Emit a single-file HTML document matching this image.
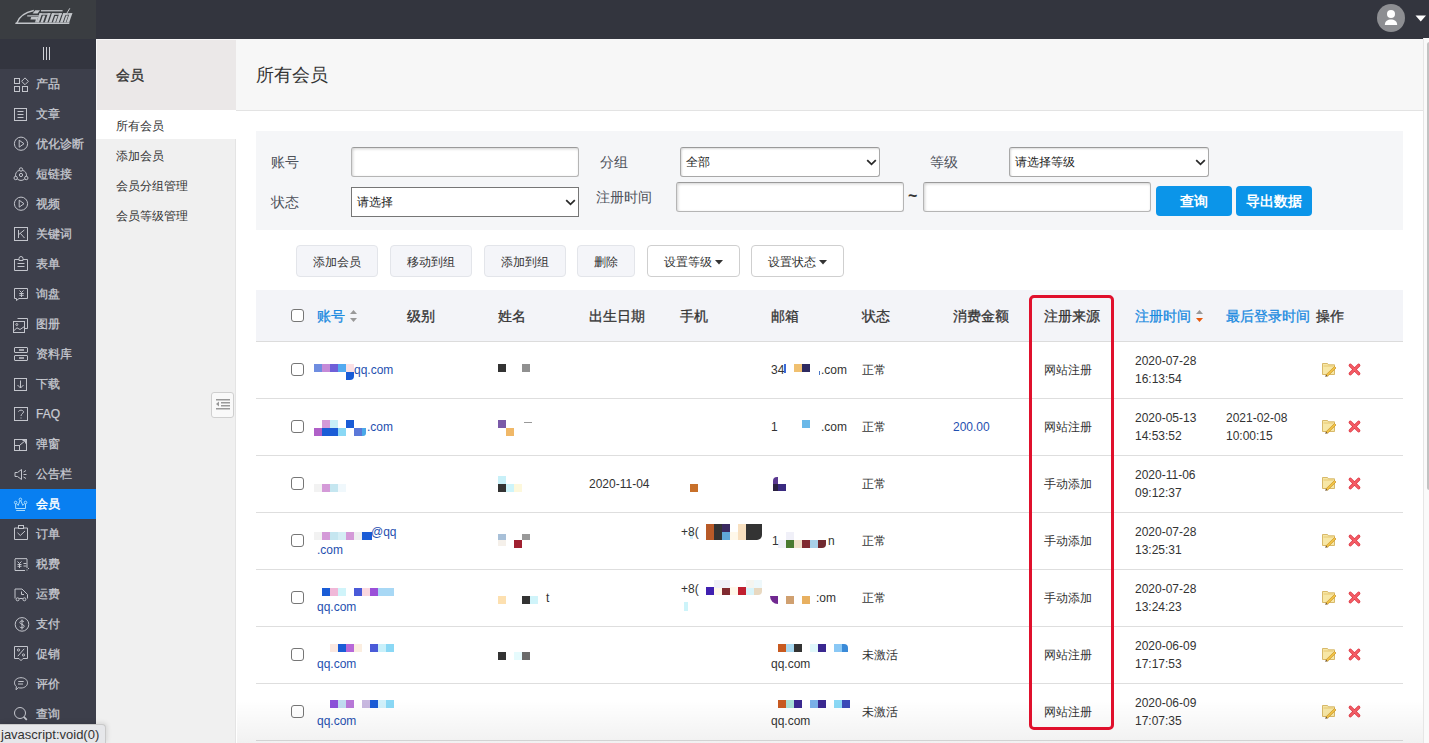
<!DOCTYPE html>
<html><head><meta charset="utf-8">
<style>
*{margin:0;padding:0;box-sizing:border-box}
html,body{width:1429px;height:743px;overflow:hidden;background:#fff;font-family:"Liberation Sans",sans-serif;color:#333;font-size:12px}
.abs{position:absolute}
#top{left:0;top:0;width:1429px;height:39px;background:#33353e}
#logo{left:0;top:0;width:96px;height:39px;background:#3a3d41}
#side{left:0;top:39px;width:96px;height:704px;background:#3d3f4b}
#tog{left:0;top:39px;width:96px;height:30px;background:#33353f}
.mi{position:absolute;left:0;width:96px;height:30px;color:#c9cbd2;font-size:12px;line-height:30px}
.mi span{position:absolute;left:36px;top:0;-webkit-text-stroke:0.25px currentColor}
.mi svg{position:absolute;left:0;top:0}
.mi.on{background:#087ff1;color:#fff}.mi.on span{-webkit-text-stroke:0.45px #fff}
#sub{left:96px;top:39px;width:140px;height:704px;background:#f0f0f0;border-right:1px solid #e4e4e4}
#subhd{left:96px;top:39px;width:140px;height:72px;background:#ebe8e8;border-bottom:1px solid #e0dede;box-shadow:inset 1px 1px 0 rgba(255,255,255,.6)}
.si{position:absolute;left:96px;width:140px;height:30px;line-height:30px;padding-left:20px;font-size:12px;color:#333}
#main{left:236px;top:39px;width:1187px;height:704px;background:#fff}
#mainhd{left:236px;top:39px;width:1187px;height:72px;background:#f7f7f7;border-bottom:1px solid #e3e3e3}
#filter{left:256px;top:131px;width:1147px;height:99px;background:#f5f6f8}
.lbl{position:absolute;font-size:14px;color:#4d515a;line-height:16px}
.inp{position:absolute;height:30px;background:#fff;border:1px solid #b5b5b5;border-top-color:#9a9a9a;border-radius:3px;box-shadow:inset 1px 1px 3px rgba(0,0,0,.18)}
.sel{position:absolute;height:30px;background:#fff;border:1px solid #a8a8a8;border-top-color:#9a9a9a;border-radius:3px;box-shadow:inset 1px 1px 2px rgba(0,0,0,.14)}
.sel span{position:absolute;left:5px;top:6px;font-size:12px;color:#222;line-height:16px}
.chev{position:absolute;top:11px}
.btnb{position:absolute;height:30px;background:#0b95e9;border-radius:4px;color:#fff;font-weight:bold;font-size:14px;line-height:30px;text-align:center}
.tb{position:absolute;top:245px;height:32px;background:#f4f5f9;border:1px solid #e3e5ea;border-radius:4px;font-size:12px;line-height:32px;text-align:center;color:#333}
.tb.w{background:#fff;border-color:#cfcfcf}
#thead{left:256px;top:290px;width:1147px;height:52px;background:#f3f4f8;border-bottom:1px solid #dcdcdc}
.th{position:absolute;top:307px;font-size:14px;font-weight:normal;-webkit-text-stroke:0.3px currentColor;color:#333;line-height:18px}
.th.b{color:#1a8ae0}
.rowl{position:absolute;left:256px;width:1147px;height:1px;background:#dedede}
.cb{position:absolute;left:291px;width:13px;height:13px;border:1px solid #767676;border-radius:3px;background:#fff}
.t{position:absolute;font-size:12px;line-height:18px;color:#333;white-space:nowrap}
.t.bl{color:#1f4fb0}
.mz{position:absolute;height:8px}
</style></head><body>
<div id="top" class="abs"></div>
<div id="logo" class="abs">
<svg class="abs" style="left:0;top:0" width="96" height="39" viewBox="0 0 96 39">
<g fill="#c2c5c9">
<path d="M16.6 23.4 C18.8 17.5 24 12.6 33.8 10.6" stroke="#c2c5c9" stroke-width="1.5" fill="none"/>
<path d="M15.6 22.5 H69.6 L69.1 24 H15.2 Z"/>
<rect x="27.2" y="15.3" width="11.7" height="1.2"/>
<path d="M35.2 10.3 H40 L37.6 13.6 H32.6 Z"/>
<path d="M31.2 17 H38.2 L36.6 22.5 H35 L35.8 19.6 H30.4 Z"/>
<rect x="41" y="10.1" width="21.6" height="1.3"/>
<g transform="translate(0,23) skewX(-19) translate(0,-23)">
<rect x="36.2" y="13.2" width="11" height="1.6"/><rect x="36.2" y="13.2" width="2.6" height="9.4"/><rect x="40.3" y="15.6" width="2.5" height="7"/><rect x="44.6" y="13.2" width="2.6" height="9.4"/>
<rect x="48.6" y="13.2" width="10" height="1.6"/><rect x="48.6" y="13.2" width="2.8" height="9.4"/><rect x="52.7" y="16" width="2.4" height="6.6"/><rect x="55.9" y="13.2" width="2.7" height="9.4"/>
<rect x="59.8" y="13.2" width="9.2" height="1.6"/><rect x="59.8" y="13.2" width="2.8" height="9.4"/><rect x="63.6" y="15.6" width="2" height="7"/><rect x="66.2" y="13.2" width="2.8" height="9.4"/>
</g>
<path d="M69.8 8.3 L65.7 15.2" stroke="#c2c5c9" stroke-width="1" fill="none"/>
</g></svg>
</div>
<!-- avatar -->
<svg class="abs" style="left:1377px;top:4px" width="28" height="28" viewBox="0 0 28 28">
<circle cx="14" cy="14" r="14" fill="#8d8e92"/>
<circle cx="14" cy="10" r="4" fill="#fff"/>
<path d="M7.8 21 C7.8 13.8 20.2 13.8 20.2 21 Z" fill="#fff"/>
</svg>
<svg class="abs" style="left:1415px;top:15px" width="12" height="8" viewBox="0 0 12 8"><path d="M0.5 0.5 L11 0.5 L5.75 6.5 Z" fill="#fff"/></svg>

<div id="side" class="abs"></div>
<div id="tog" class="abs">
<svg class="abs" style="left:43px;top:8px" width="7" height="14" viewBox="0 0 7 14"><g stroke="#cfd0d6" stroke-width="1"><path d="M0.5 0V13M3.5 0V13M6.5 0V13"/></g></svg>
</div>
<div class="mi" style="top:69px"><svg width="36" height="30" viewBox="0 0 36 30"><g stroke="#c3c5cc" stroke-width="1" fill="none"><rect x="14.5" y="9.5" width="5" height="5"/><rect x="14.5" y="17.5" width="5" height="5"/><rect x="22.5" y="17.5" width="5" height="5"/><path d="M25 8.9 L28.4 12.3 L25 15.7 L21.6 12.3 Z"/></g></svg><span>产品</span></div>
<div class="mi" style="top:99px"><svg width="36" height="30" viewBox="0 0 36 30"><g stroke="#c3c5cc" stroke-width="1" fill="none"><rect x="14.5" y="9.5" width="12" height="12"/><path d="M17.5 12.5H23.5M17.5 15.5H23.5M17.5 18.5H23.5"/></g></svg><span>文章</span></div>
<div class="mi" style="top:129px"><svg width="36" height="30" viewBox="0 0 36 30"><g stroke="#c3c5cc" stroke-width="1" fill="none"><circle cx="21" cy="14.7" r="6.6"/><path d="M19.2 11.2 L24 14.7 L19.2 18.2 Z"/></g></svg><span>优化诊断</span></div>
<div class="mi" style="top:159px"><svg width="36" height="30" viewBox="0 0 36 30"><g stroke="#c3c5cc" stroke-width="1" fill="none"><circle cx="21" cy="10.5" r="1.7"/><circle cx="15.7" cy="19" r="1.7"/><circle cx="26.3" cy="19" r="1.7"/><circle cx="21" cy="16" r="1.6"/><path d="M19.5 11.3 A5.5 5.5 0 0 0 15.6 17.3 M22.5 11.3 A5.5 5.5 0 0 1 26.4 17.3 M17.3 20 A5.5 5.5 0 0 0 24.7 20"/></g></svg><span>短链接</span></div>
<div class="mi" style="top:189px"><svg width="36" height="30" viewBox="0 0 36 30"><g stroke="#c3c5cc" stroke-width="1" fill="none"><circle cx="21" cy="14.7" r="6.6"/><path d="M19.2 11.2 L24 14.7 L19.2 18.2 Z"/></g></svg><span>视频</span></div>
<div class="mi" style="top:219px"><svg width="36" height="30" viewBox="0 0 36 30"><g stroke="#c3c5cc" stroke-width="1" fill="none"><rect x="14.5" y="8.5" width="13" height="13"/><path d="M18.5 11V19M24.3 11 L18.8 15.5 M20.3 14.3 L24.5 19"/></g></svg><span>关键词</span></div>
<div class="mi" style="top:249px"><svg width="36" height="30" viewBox="0 0 36 30"><g stroke="#c3c5cc" stroke-width="1" fill="none"><path d="M19 10.5H14.5V21.5H27.5V10.5H23"/><path d="M19 11.5 V9.5 A2 2 0 0 1 23 9.5 V11.5 Z"/><path d="M17.5 14.5H24.5M17.5 17.5H24.5"/></g></svg><span>表单</span></div>
<div class="mi" style="top:279px"><svg width="36" height="30" viewBox="0 0 36 30"><g stroke="#c3c5cc" stroke-width="1" fill="none"><path d="M14.5 9.5H27.5V19.5H19L16.5 21.5V19.5H14.5Z"/><path d="M19.5 11.5L21.5 13.5L23.5 11.5M21.5 13.5V18M19.3 14.5H23.7M19.3 16.3H23.7"/></g></svg><span>询盘</span></div>
<div class="mi" style="top:309px"><svg width="36" height="30" viewBox="0 0 36 30"><g stroke="#c3c5cc" stroke-width="1" fill="none"><path d="M17.5 9.5H27.5V19.5H25"/><rect x="13.5" y="12.5" width="11" height="11"/><circle cx="16.8" cy="15.5" r="1"/><path d="M13.5 22 L17 18.8 L20 20.5 L24.5 17.5"/></g></svg><span>图册</span></div>
<div class="mi" style="top:339px"><svg width="36" height="30" viewBox="0 0 36 30"><g stroke="#c3c5cc" stroke-width="1" fill="none"><rect x="14.5" y="8.5" width="13" height="5" rx="0.5"/><rect x="14.5" y="16.5" width="13" height="5" rx="0.5"/></g><path d="M19 11H24M19 19H24" stroke="#c3c5cc" stroke-width="1.6"/></svg><span>资料库</span></div>
<div class="mi" style="top:369px"><svg width="36" height="30" viewBox="0 0 36 30"><g stroke="#c3c5cc" stroke-width="1" fill="none"><rect x="14.5" y="9.5" width="12" height="12"/><path d="M20.5 11.5V19M17.5 16 L20.5 19 L23.5 16"/></g></svg><span>下载</span></div>
<div class="mi" style="top:399px"><svg width="36" height="30" viewBox="0 0 36 30"><g stroke="#c3c5cc" stroke-width="1" fill="none"><rect x="14.5" y="8.5" width="13" height="13"/><path d="M18.6 12.7 C18.6 10.6 23.5 10.6 23.5 12.9 C23.5 14.6 21 14.8 21 17"/></g><rect x="20.5" y="18.5" width="1" height="1" fill="#c3c5cc"/></svg><span>FAQ</span></div>
<div class="mi" style="top:429px"><svg width="36" height="30" viewBox="0 0 36 30"><g stroke="#c3c5cc" stroke-width="1" fill="none"><rect x="14.5" y="10.5" width="12" height="11"/><rect x="14.5" y="16.5" width="5" height="5"/><path d="M20 16 L25.5 11.5 M22.5 11.5 H25.5 V14.5"/></g></svg><span>弹窗</span></div>
<div class="mi" style="top:459px"><svg width="36" height="30" viewBox="0 0 36 30"><g stroke="#c3c5cc" stroke-width="1" fill="none"><path d="M15 13.5 H17.5 L21.5 10.5 V20.5 L17.5 17.5 H15 Z"/><path d="M23.5 13 L26 11.5 M23.5 15.5 H26.5 M23.5 18 L26 19.5"/></g></svg><span>公告栏</span></div>
<div class="mi on" style="top:489px"><svg width="36" height="30" viewBox="0 0 36 30"><g stroke="#a9ddff" stroke-width="1" fill="none"><circle cx="15.65" cy="13.5" r="1.3"/><circle cx="20.4" cy="10.4" r="1.3"/><circle cx="25.5" cy="13.5" r="1.3"/><path d="M15.65 14.8 V19.5 H25.5 V14.8 M16.5 14.6 L18.2 16.4 L20 11.7 M20.8 11.7 L22.8 16.4 L24.6 14.6 M16.2 21.5 H25"/></g></svg><span>会员</span></div>
<div class="mi" style="top:519px"><svg width="36" height="30" viewBox="0 0 36 30"><g stroke="#c3c5cc" stroke-width="1" fill="none"><path d="M18 9H14.5V20.5H27.5V9H24"/><rect x="18.5" y="6.5" width="5" height="3"/><path d="M17.5 13.8 L20.3 16.5 L25 12"/></g></svg><span>订单</span></div>
<div class="mi" style="top:549px"><svg width="36" height="30" viewBox="0 0 36 30"><g stroke="#c3c5cc" stroke-width="1" fill="none"><path d="M15 21.5 V10 Q16 8.6 17 10 Q18 8.6 19 10 Q20 8.6 21 10 Q22 8.6 23 10 Q24 8.6 25 10 Q26 8.6 27 10 V19" /><path d="M15 21.5 H25"/><path d="M17.5 12.5 L19.5 14.5 L21.5 12.5 M19.5 14.5 V19 M17.5 15.5 H21.5 M17.5 17.3 H21.5 M23.5 14.5 H26.5 M23.5 17 H26.5"/></g><rect x="26.5" y="20.5" width="1" height="1" fill="#c3c5cc"/><rect x="28" y="19" width="1" height="1" fill="#c3c5cc"/></svg><span>税费</span></div>
<div class="mi" style="top:579px"><svg width="36" height="30" viewBox="0 0 36 30"><g stroke="#c3c5cc" stroke-width="1" fill="none"><path d="M15 19.5 V10 H22 L27.5 15.5 V19.5"/><path d="M21.5 12.5 V15.5 H24"/><path d="M19.3 19.5 H22.8"/><circle cx="17.6" cy="20.3" r="1.5"/><circle cx="24.4" cy="20.3" r="1.5"/></g></svg><span>运费</span></div>
<div class="mi" style="top:609px"><svg width="36" height="30" viewBox="0 0 36 30"><g stroke="#c3c5cc" stroke-width="1" fill="none"><circle cx="22" cy="15.4" r="6.8"/><path d="M24 12.8 C23.5 11.6 19.8 11.5 19.8 13.5 C19.8 15.5 24.2 15 24.2 17.3 C24.2 19.2 20.3 19.2 19.7 17.8 M22 10.5V20.5"/></g></svg><span>支付</span></div>
<div class="mi" style="top:639px"><svg width="36" height="30" viewBox="0 0 36 30"><g stroke="#c3c5cc" stroke-width="1" fill="none"><path d="M14.5 7.5 H27.5 V19.5 H23 L21 21.7 L19 19.5 H14.5 Z"/><path d="M24.2 9.8 L17.8 17.2"/><circle cx="18.5" cy="11" r="1.1"/><circle cx="23.5" cy="16" r="1.1"/></g></svg><span>促销</span></div>
<div class="mi" style="top:669px"><svg width="36" height="30" viewBox="0 0 36 30"><g stroke="#c3c5cc" stroke-width="1" fill="none"><path d="M21 8.7 C25 8.7 27.5 11 27.5 13.8 C27.5 16.7 24.8 19 21 19 C20 19 19.2 18.9 18.4 18.6 L16 20.8 L16.4 17.6 C15.2 16.6 14.5 15.3 14.5 13.8 C14.5 11 17 8.7 21 8.7Z"/><path d="M18.3 12.5H23.7M18 15H23"/></g></svg><span>评价</span></div>
<div class="mi" style="top:699px"><svg width="36" height="30" viewBox="0 0 36 30"><g stroke="#c3c5cc" stroke-width="1" fill="none"><circle cx="20" cy="14" r="5.5"/></g><path d="M23.8 17.8 L26.8 20.8" stroke="#c3c5cc" stroke-width="1.7"/></svg><span>查询</span></div>

<div id="sub" class="abs"></div>
<div id="subhd" class="abs"></div>
<div class="abs" style="left:116px;top:66px;font-size:14px;-webkit-text-stroke:0.35px #333;color:#333;line-height:18px">会员</div>
<div class="abs" style="left:96px;top:110px;width:140px;height:29px;background:#fff"></div>
<div class="si" style="top:111px">所有会员</div>
<div class="si" style="top:141px">添加会员</div>
<div class="si" style="top:171px">会员分组管理</div>
<div class="si" style="top:201px">会员等级管理</div>
<div class="abs" style="left:211px;top:392px;width:23px;height:26px;background:#f9f9f9;border:1px solid #cfcfcf;border-radius:3px">
<svg class="abs" style="left:4px;top:5px" width="15" height="12" viewBox="0 0 15 12"><g fill="#999"><rect x="0" y="1" width="14" height="1.5"/><rect x="5" y="4" width="9" height="1.5"/><rect x="5" y="7" width="9" height="1.5"/><rect x="0" y="10" width="14" height="1.5"/><path d="M0 6 L3 3.5 L3 8.5 Z"/></g></svg>
</div>

<div id="main" class="abs"></div>
<div id="mainhd" class="abs"></div>
<div class="abs" style="left:256px;top:64px;font-size:18px;color:#333;line-height:22px">所有会员</div>

<div id="filter" class="abs"></div>
<div class="lbl" style="left:271px;top:154px">账号</div>
<div class="inp" style="left:351px;top:147px;width:228px"></div>
<div class="lbl" style="left:600px;top:154px">分组</div>
<div class="sel" style="left:680px;top:147px;width:200px"><span>全部</span><svg class="chev" style="left:185px" width="11" height="7" viewBox="0 0 11 7"><path d="M1.2 1.2 L5.5 5.3 L9.8 1.2" stroke="#2a2a2a" stroke-width="1.8" fill="none"/></svg></div>
<div class="lbl" style="left:930px;top:154px">等级</div>
<div class="sel" style="left:1009px;top:147px;width:200px"><span>请选择等级</span><svg class="chev" style="left:185px" width="11" height="7" viewBox="0 0 11 7"><path d="M1.2 1.2 L5.5 5.3 L9.8 1.2" stroke="#2a2a2a" stroke-width="1.8" fill="none"/></svg></div>
<div class="lbl" style="left:271px;top:194px">状态</div>
<div class="sel" style="left:351px;top:187px;width:228px;border-color:#767676;border-radius:0;box-shadow:none"><span>请选择</span><svg class="chev" style="left:213px" width="11" height="7" viewBox="0 0 11 7"><path d="M1.2 1.2 L5.5 5.3 L9.8 1.2" stroke="#2a2a2a" stroke-width="1.8" fill="none"/></svg></div>
<div class="lbl" style="left:596px;top:189px">注册时间</div>
<div class="inp" style="left:676px;top:182px;width:228px"></div>
<div class="abs" style="left:908px;top:186px;font-size:16px;font-weight:bold;color:#333;line-height:20px">~</div>
<div class="inp" style="left:923px;top:182px;width:228px"></div>
<div class="btnb" style="left:1156px;top:186px;width:76px">查询</div>
<div class="btnb" style="left:1236px;top:186px;width:76px">导出数据</div>

<div class="tb" style="left:296px;width:82px">添加会员</div>
<div class="tb" style="left:390px;width:82px">移动到组</div>
<div class="tb" style="left:484px;width:82px">添加到组</div>
<div class="tb" style="left:577px;width:58px">删除</div>
<div class="tb w" style="left:647px;width:93px">设置等级 <svg width="8" height="5" viewBox="0 0 8 5" style="vertical-align:1px"><path d="M0 0H8L4 4.5Z" fill="#333"/></svg></div>
<div class="tb w" style="left:751px;width:93px">设置状态 <svg width="8" height="5" viewBox="0 0 8 5" style="vertical-align:1px"><path d="M0 0H8L4 4.5Z" fill="#333"/></svg></div>

<div id="thead" class="abs"></div>
<div class="cb" style="top:309px"></div>
<div class="th b" style="left:317px">账号</div>
<svg class="abs" style="left:350px;top:310px" width="7" height="12" viewBox="0 0 7 12"><path d="M0 4 L3.5 0 L7 4Z M0 8 L7 8 L3.5 12Z" fill="#999"/></svg>
<div class="th" style="left:407px">级别</div>
<div class="th" style="left:498px">姓名</div>
<div class="th" style="left:589px">出生日期</div>
<div class="th" style="left:680px">手机</div>
<div class="th" style="left:771px">邮箱</div>
<div class="th" style="left:862px">状态</div>
<div class="th" style="left:953px">消费金额</div>
<div class="th" style="left:1044px">注册来源</div>
<div class="th b" style="left:1135px">注册时间</div>
<svg class="abs" style="left:1196px;top:310px" width="7" height="12" viewBox="0 0 7 12"><path d="M0 4 L3.5 0 L7 4Z" fill="#999"/><path d="M0 8 L7 8 L3.5 12Z" fill="#e8590c"/></svg>
<div class="th b" style="left:1226px">最后登录时间</div>
<div class="th" style="left:1316px">操作</div>

<div class="rowl" style="top:398px"></div><div class="cb" style="top:363px"></div><div class="mz" style="left:314px;top:364px;width:8px;height:8px;background:#6f8de0"></div><div class="mz" style="left:322px;top:364px;width:8px;height:8px;background:#c58ad8"></div><div class="mz" style="left:330px;top:364px;width:8px;height:8px;background:#6f5fd8"></div><div class="mz" style="left:338px;top:364px;width:8px;height:8px;background:#53aaf0"></div><div class="mz" style="left:346px;top:364px;width:8px;height:8px;background:#fbe0e4"></div><div class="mz" style="left:346px;top:372px;width:8px;height:8px;background:#1a5cd6;border-radius:0 0 4px 0"></div><div class="mz" style="left:498px;top:364px;width:8px;height:8px;background:#333"></div><div class="mz" style="left:522px;top:364px;width:8px;height:8px;background:#909090"></div><div class="mz" style="left:784px;top:364px;width:2px;height:9px;background:#3a6ad8"></div><div class="mz" style="left:794px;top:364px;width:8px;height:8px;background:#f0c070"></div><div class="mz" style="left:802px;top:364px;width:8px;height:8px;background:#2e2a60"></div><div class="mz" style="left:819px;top:371px;width:1px;height:4px;background:#4a78c8"></div><div class="t bl" style="left:354px;top:361px">qq.com</div><div class="t " style="left:771px;top:361px">34</div><div class="t " style="left:821px;top:361px">.com</div><div class="t" style="left:862px;top:361px">正常</div><div class="t" style="left:1044px;top:361px">网站注册</div><div class="t" style="left:1135px;top:352px">2020-07-28<br>16:13:54</div><div class="abs" style="left:1321px;top:362px"><svg width="17" height="15" viewBox="0 0 17 15"><path d="M1.5 1.5 H6.5 L7.5 2.8 H13.5 V12.5 H1.5 Z" fill="#f7e7a6" stroke="#d4b25e" stroke-width="0.9"/><path d="M2.5 4 H12.5" stroke="#e8c870" stroke-width="1"/><path d="M5 12.8 L13.5 4.5 L15 6 L6.5 14.3 Z" fill="#f2c445" stroke="#c8922a" stroke-width="0.7"/><path d="M4.2 14.8 L5 12.8 L6.5 14.3 Z" fill="#5a3a10"/></svg></div><div class="abs" style="left:1347px;top:362px"><svg width="15" height="15" viewBox="0 0 15 15"><path d="M3.3 3.3 L11.7 11.7 M11.7 3.3 L3.3 11.7" stroke="#d8323e" stroke-width="3.3" stroke-linecap="round"/><path d="M3.3 3.3 L11.7 11.7 M11.7 3.3 L3.3 11.7" stroke="#f55d66" stroke-width="2" stroke-linecap="round"/></svg></div>
<div class="rowl" style="top:455px"></div><div class="cb" style="top:420px"></div><div class="mz" style="left:322px;top:420px;width:8px;height:8px;background:#d49ad8"></div><div class="mz" style="left:330px;top:420px;width:8px;height:8px;background:#c7f0f8"></div><div class="mz" style="left:346px;top:420px;width:8px;height:8px;background:#1a5cd6"></div><div class="mz" style="left:314px;top:428px;width:8px;height:8px;background:#b060c8"></div><div class="mz" style="left:322px;top:428px;width:8px;height:8px;background:#1a5cd6"></div><div class="mz" style="left:330px;top:428px;width:8px;height:8px;background:#1a5cd6"></div><div class="mz" style="left:338px;top:428px;width:8px;height:8px;background:#8ad8f5"></div><div class="mz" style="left:354px;top:428px;width:8px;height:8px;background:#5b78d8"></div><div class="mz" style="left:362px;top:428px;width:4px;height:8px;background:#4aa8e8;border-radius:0 0 3px 0"></div><div class="mz" style="left:498px;top:420px;width:8px;height:8px;background:#7a5aa8"></div><div class="mz" style="left:506px;top:428px;width:8px;height:8px;background:#f0b868"></div><div class="mz" style="left:524px;top:422px;width:8px;height:1px;background:#999"></div><div class="mz" style="left:802px;top:420px;width:8px;height:8px;background:#6ab8e8"></div><div class="t bl" style="left:367px;top:418px">.com</div><div class="t " style="left:771px;top:418px">1</div><div class="t " style="left:821px;top:418px">.com</div><div class="t" style="left:862px;top:418px">正常</div><div class="t bl" style="left:953px;top:418px">200.00</div><div class="t" style="left:1044px;top:418px">网站注册</div><div class="t" style="left:1135px;top:409px">2020-05-13<br>14:53:52</div><div class="t" style="left:1226px;top:409px">2021-02-08<br>10:00:15</div><div class="abs" style="left:1321px;top:419px"><svg width="17" height="15" viewBox="0 0 17 15"><path d="M1.5 1.5 H6.5 L7.5 2.8 H13.5 V12.5 H1.5 Z" fill="#f7e7a6" stroke="#d4b25e" stroke-width="0.9"/><path d="M2.5 4 H12.5" stroke="#e8c870" stroke-width="1"/><path d="M5 12.8 L13.5 4.5 L15 6 L6.5 14.3 Z" fill="#f2c445" stroke="#c8922a" stroke-width="0.7"/><path d="M4.2 14.8 L5 12.8 L6.5 14.3 Z" fill="#5a3a10"/></svg></div><div class="abs" style="left:1347px;top:419px"><svg width="15" height="15" viewBox="0 0 15 15"><path d="M3.3 3.3 L11.7 11.7 M11.7 3.3 L3.3 11.7" stroke="#d8323e" stroke-width="3.3" stroke-linecap="round"/><path d="M3.3 3.3 L11.7 11.7 M11.7 3.3 L3.3 11.7" stroke="#f55d66" stroke-width="2" stroke-linecap="round"/></svg></div>
<div class="rowl" style="top:512px"></div><div class="cb" style="top:477px"></div><div class="mz" style="left:314px;top:484px;width:8px;height:8px;background:#f2f2f2"></div><div class="mz" style="left:322px;top:484px;width:8px;height:8px;background:#d49ad8"></div><div class="mz" style="left:330px;top:484px;width:8px;height:8px;background:#c5e6f0"></div><div class="mz" style="left:338px;top:484px;width:8px;height:8px;background:#f0f8fc"></div><div class="mz" style="left:498px;top:476px;width:8px;height:8px;background:#c8f0f8"></div><div class="mz" style="left:498px;top:484px;width:8px;height:8px;background:#333"></div><div class="mz" style="left:506px;top:484px;width:8px;height:8px;background:#cdf4fa"></div><div class="mz" style="left:514px;top:484px;width:8px;height:8px;background:#fdf8dc"></div><div class="mz" style="left:690px;top:484px;width:8px;height:8px;background:#c8702a"></div><div class="mz" style="left:773px;top:477px;width:5px;height:7px;background:#5a3890;border-radius:4px 0 0 0"></div><div class="mz" style="left:773px;top:484px;width:5px;height:7px;background:#2a2040"></div><div class="mz" style="left:778px;top:484px;width:8px;height:7px;background:#3a2a80"></div><div class="t" style="left:589px;top:475px">2020-11-04</div><div class="t" style="left:862px;top:475px">正常</div><div class="t" style="left:1044px;top:475px">手动添加</div><div class="t" style="left:1135px;top:466px">2020-11-06<br>09:12:37</div><div class="abs" style="left:1321px;top:476px"><svg width="17" height="15" viewBox="0 0 17 15"><path d="M1.5 1.5 H6.5 L7.5 2.8 H13.5 V12.5 H1.5 Z" fill="#f7e7a6" stroke="#d4b25e" stroke-width="0.9"/><path d="M2.5 4 H12.5" stroke="#e8c870" stroke-width="1"/><path d="M5 12.8 L13.5 4.5 L15 6 L6.5 14.3 Z" fill="#f2c445" stroke="#c8922a" stroke-width="0.7"/><path d="M4.2 14.8 L5 12.8 L6.5 14.3 Z" fill="#5a3a10"/></svg></div><div class="abs" style="left:1347px;top:476px"><svg width="15" height="15" viewBox="0 0 15 15"><path d="M3.3 3.3 L11.7 11.7 M11.7 3.3 L3.3 11.7" stroke="#d8323e" stroke-width="3.3" stroke-linecap="round"/><path d="M3.3 3.3 L11.7 11.7 M11.7 3.3 L3.3 11.7" stroke="#f55d66" stroke-width="2" stroke-linecap="round"/></svg></div>
<div class="rowl" style="top:569px"></div><div class="cb" style="top:534px"></div><div class="mz" style="left:314px;top:532px;width:8px;height:8px;background:#f2f2f2"></div><div class="mz" style="left:322px;top:532px;width:8px;height:8px;background:#d49ad8"></div><div class="mz" style="left:330px;top:532px;width:8px;height:8px;background:#c5e6f0"></div><div class="mz" style="left:338px;top:532px;width:8px;height:8px;background:#d5eef5"></div><div class="mz" style="left:346px;top:532px;width:8px;height:8px;background:#d49ad8"></div><div class="mz" style="left:354px;top:532px;width:8px;height:8px;background:#eef0f0"></div><div class="mz" style="left:362px;top:532px;width:10px;height:8px;background:#1a5cd6"></div><div class="mz" style="left:498px;top:534px;width:8px;height:6px;background:#a8c0d8"></div><div class="mz" style="left:498px;top:540px;width:8px;height:6px;background:#f5f0ea"></div><div class="mz" style="left:514px;top:540px;width:8px;height:8px;background:#a02030"></div><div class="mz" style="left:522px;top:534px;width:8px;height:6px;background:#999"></div><div class="mz" style="left:706px;top:524px;width:8px;height:16px;background:#b85a28"></div><div class="mz" style="left:714px;top:524px;width:8px;height:16px;background:#333"></div><div class="mz" style="left:722px;top:524px;width:8px;height:8px;background:#3a2a60"></div><div class="mz" style="left:722px;top:532px;width:8px;height:8px;background:#60a8d8"></div><div class="mz" style="left:730px;top:532px;width:8px;height:8px;background:#fff8ea"></div><div class="mz" style="left:738px;top:524px;width:8px;height:16px;background:#f8e0c0"></div><div class="mz" style="left:746px;top:524px;width:16px;height:16px;background:#333;border-radius:0 0 5px 0"></div><div class="mz" style="left:690px;top:532px;width:3px;height:7px;background:#cdeefa"></div><div class="mz" style="left:786px;top:532px;width:8px;height:8px;background:#f0f0f8"></div><div class="mz" style="left:778px;top:540px;width:8px;height:8px;background:#f0f0f8"></div><div class="mz" style="left:786px;top:540px;width:8px;height:8px;background:#4a7a30"></div><div class="mz" style="left:794px;top:540px;width:8px;height:8px;background:#f0e0c8"></div><div class="mz" style="left:802px;top:540px;width:8px;height:8px;background:#802a30"></div><div class="mz" style="left:810px;top:540px;width:8px;height:8px;background:#a8d0e8"></div><div class="mz" style="left:818px;top:540px;width:8px;height:8px;background:#702a30;border-radius:0 0 4px 0"></div><div class="t bl" style="left:371px;top:523px">@qq</div><div class="t bl" style="left:317px;top:541px">.com</div><div class="t " style="left:681px;top:523px">+8(</div><div class="t " style="left:772px;top:532px">1</div><div class="t " style="left:828px;top:532px">n</div><div class="t" style="left:862px;top:532px">正常</div><div class="t" style="left:1044px;top:532px">手动添加</div><div class="t" style="left:1135px;top:523px">2020-07-28<br>13:25:31</div><div class="abs" style="left:1321px;top:533px"><svg width="17" height="15" viewBox="0 0 17 15"><path d="M1.5 1.5 H6.5 L7.5 2.8 H13.5 V12.5 H1.5 Z" fill="#f7e7a6" stroke="#d4b25e" stroke-width="0.9"/><path d="M2.5 4 H12.5" stroke="#e8c870" stroke-width="1"/><path d="M5 12.8 L13.5 4.5 L15 6 L6.5 14.3 Z" fill="#f2c445" stroke="#c8922a" stroke-width="0.7"/><path d="M4.2 14.8 L5 12.8 L6.5 14.3 Z" fill="#5a3a10"/></svg></div><div class="abs" style="left:1347px;top:533px"><svg width="15" height="15" viewBox="0 0 15 15"><path d="M3.3 3.3 L11.7 11.7 M11.7 3.3 L3.3 11.7" stroke="#d8323e" stroke-width="3.3" stroke-linecap="round"/><path d="M3.3 3.3 L11.7 11.7 M11.7 3.3 L3.3 11.7" stroke="#f55d66" stroke-width="2" stroke-linecap="round"/></svg></div>
<div class="rowl" style="top:626px"></div><div class="cb" style="top:591px"></div><div class="mz" style="left:322px;top:588px;width:8px;height:8px;background:#1a5cd6"></div><div class="mz" style="left:330px;top:588px;width:8px;height:8px;background:#f0b8d8"></div><div class="mz" style="left:338px;top:588px;width:8px;height:8px;background:#d0f4fa"></div><div class="mz" style="left:354px;top:588px;width:8px;height:8px;background:#4a5ad8"></div><div class="mz" style="left:362px;top:588px;width:8px;height:8px;background:#fbd8e0"></div><div class="mz" style="left:370px;top:588px;width:8px;height:8px;background:#9a50d8"></div><div class="mz" style="left:378px;top:588px;width:8px;height:8px;background:#a8d8f5"></div><div class="mz" style="left:386px;top:588px;width:8px;height:8px;background:#a8d8f5"></div><div class="mz" style="left:498px;top:596px;width:8px;height:8px;background:#fde0b0"></div><div class="mz" style="left:522px;top:596px;width:8px;height:8px;background:#333"></div><div class="mz" style="left:530px;top:596px;width:8px;height:8px;background:#d0f4fa"></div><div class="mz" style="left:706px;top:587px;width:8px;height:8px;background:#4020b0"></div><div class="mz" style="left:714px;top:587px;width:8px;height:8px;background:#fff8ea"></div><div class="mz" style="left:722px;top:587px;width:8px;height:8px;background:#802a30"></div><div class="mz" style="left:730px;top:587px;width:8px;height:8px;background:#fff8ea"></div><div class="mz" style="left:738px;top:587px;width:8px;height:8px;background:#c02030"></div><div class="mz" style="left:746px;top:587px;width:8px;height:8px;background:#d8f4fa"></div><div class="mz" style="left:754px;top:587px;width:8px;height:8px;background:#e8d8c0;border-radius:0 0 4px 0"></div><div class="mz" style="left:714px;top:580px;width:8px;height:8px;background:#f0f0f8"></div><div class="mz" style="left:722px;top:580px;width:8px;height:8px;background:#f0f0f8"></div><div class="mz" style="left:746px;top:580px;width:8px;height:8px;background:#f5f5f0"></div><div class="mz" style="left:754px;top:580px;width:8px;height:8px;background:#eef8fb"></div><div class="mz" style="left:684px;top:602px;width:4px;height:9px;background:#cdf4fa"></div><div class="mz" style="left:770px;top:596px;width:8px;height:8px;background:#702890;border-radius:0 0 0 8px"></div><div class="mz" style="left:786px;top:596px;width:8px;height:8px;background:#d0a070"></div><div class="mz" style="left:802px;top:596px;width:8px;height:8px;background:#e8b060"></div><div class="t bl" style="left:317px;top:598px">qq.com</div><div class="t " style="left:546px;top:589px">t</div><div class="t " style="left:681px;top:580px">+8(</div><div class="t " style="left:816px;top:589px">:om</div><div class="t" style="left:862px;top:589px">正常</div><div class="t" style="left:1044px;top:589px">手动添加</div><div class="t" style="left:1135px;top:580px">2020-07-28<br>13:24:23</div><div class="abs" style="left:1321px;top:590px"><svg width="17" height="15" viewBox="0 0 17 15"><path d="M1.5 1.5 H6.5 L7.5 2.8 H13.5 V12.5 H1.5 Z" fill="#f7e7a6" stroke="#d4b25e" stroke-width="0.9"/><path d="M2.5 4 H12.5" stroke="#e8c870" stroke-width="1"/><path d="M5 12.8 L13.5 4.5 L15 6 L6.5 14.3 Z" fill="#f2c445" stroke="#c8922a" stroke-width="0.7"/><path d="M4.2 14.8 L5 12.8 L6.5 14.3 Z" fill="#5a3a10"/></svg></div><div class="abs" style="left:1347px;top:590px"><svg width="15" height="15" viewBox="0 0 15 15"><path d="M3.3 3.3 L11.7 11.7 M11.7 3.3 L3.3 11.7" stroke="#d8323e" stroke-width="3.3" stroke-linecap="round"/><path d="M3.3 3.3 L11.7 11.7 M11.7 3.3 L3.3 11.7" stroke="#f55d66" stroke-width="2" stroke-linecap="round"/></svg></div>
<div class="rowl" style="top:683px"></div><div class="cb" style="top:648px"></div><div class="mz" style="left:330px;top:644px;width:8px;height:8px;background:#fbe8e0"></div><div class="mz" style="left:338px;top:644px;width:8px;height:8px;background:#1a5cd6"></div><div class="mz" style="left:346px;top:644px;width:8px;height:8px;background:#b868d8"></div><div class="mz" style="left:354px;top:644px;width:8px;height:8px;background:#fbeee0"></div><div class="mz" style="left:370px;top:644px;width:8px;height:8px;background:#4a5ad8"></div><div class="mz" style="left:378px;top:644px;width:8px;height:8px;background:#c8f0fa"></div><div class="mz" style="left:386px;top:644px;width:8px;height:8px;background:#8ad8f5"></div><div class="mz" style="left:498px;top:652px;width:8px;height:8px;background:#333"></div><div class="mz" style="left:514px;top:652px;width:8px;height:8px;background:#e6fbfd"></div><div class="mz" style="left:522px;top:652px;width:8px;height:8px;background:#6a6a6a"></div><div class="mz" style="left:778px;top:644px;width:8px;height:8px;background:#c85a20"></div><div class="mz" style="left:786px;top:644px;width:8px;height:8px;background:#a8d8f0"></div><div class="mz" style="left:794px;top:644px;width:8px;height:8px;background:#333"></div><div class="mz" style="left:810px;top:644px;width:8px;height:8px;background:#e0f8fb"></div><div class="mz" style="left:818px;top:644px;width:8px;height:8px;background:#3a2890"></div><div class="mz" style="left:834px;top:644px;width:8px;height:8px;background:#8ac8f5"></div><div class="mz" style="left:842px;top:644px;width:6px;height:8px;background:#3a8ad8;border-radius:0 4px 0 0"></div><div class="t bl" style="left:317px;top:655px">qq.com</div><div class="t " style="left:771px;top:655px">qq.com</div><div class="t" style="left:862px;top:646px">未激活</div><div class="t" style="left:1044px;top:646px">网站注册</div><div class="t" style="left:1135px;top:637px">2020-06-09<br>17:17:53</div><div class="abs" style="left:1321px;top:647px"><svg width="17" height="15" viewBox="0 0 17 15"><path d="M1.5 1.5 H6.5 L7.5 2.8 H13.5 V12.5 H1.5 Z" fill="#f7e7a6" stroke="#d4b25e" stroke-width="0.9"/><path d="M2.5 4 H12.5" stroke="#e8c870" stroke-width="1"/><path d="M5 12.8 L13.5 4.5 L15 6 L6.5 14.3 Z" fill="#f2c445" stroke="#c8922a" stroke-width="0.7"/><path d="M4.2 14.8 L5 12.8 L6.5 14.3 Z" fill="#5a3a10"/></svg></div><div class="abs" style="left:1347px;top:647px"><svg width="15" height="15" viewBox="0 0 15 15"><path d="M3.3 3.3 L11.7 11.7 M11.7 3.3 L3.3 11.7" stroke="#d8323e" stroke-width="3.3" stroke-linecap="round"/><path d="M3.3 3.3 L11.7 11.7 M11.7 3.3 L3.3 11.7" stroke="#f55d66" stroke-width="2" stroke-linecap="round"/></svg></div>
<div class="rowl" style="top:740px"></div><div class="cb" style="top:705px"></div><div class="mz" style="left:330px;top:700px;width:8px;height:8px;background:#8a50d8"></div><div class="mz" style="left:338px;top:700px;width:8px;height:8px;background:#c0dcf0"></div><div class="mz" style="left:346px;top:700px;width:8px;height:8px;background:#b878d8"></div><div class="mz" style="left:362px;top:700px;width:8px;height:8px;background:#c8b8e0"></div><div class="mz" style="left:370px;top:700px;width:8px;height:8px;background:#1a5cd6"></div><div class="mz" style="left:378px;top:700px;width:8px;height:8px;background:#d0f0fa"></div><div class="mz" style="left:386px;top:700px;width:8px;height:8px;background:#8ad8f5"></div><div class="mz" style="left:778px;top:700px;width:8px;height:8px;background:#c85a20"></div><div class="mz" style="left:786px;top:700px;width:8px;height:8px;background:#a8e0d8"></div><div class="mz" style="left:794px;top:700px;width:8px;height:8px;background:#3a2890"></div><div class="mz" style="left:810px;top:700px;width:8px;height:8px;background:#7ab0e8"></div><div class="mz" style="left:818px;top:700px;width:8px;height:8px;background:#3a2890"></div><div class="mz" style="left:834px;top:700px;width:8px;height:8px;background:#8ad8f5"></div><div class="mz" style="left:842px;top:700px;width:8px;height:8px;background:#3a4ab8"></div><div class="t bl" style="left:317px;top:712px">qq.com</div><div class="t " style="left:771px;top:712px">qq.com</div><div class="t" style="left:862px;top:703px">未激活</div><div class="t" style="left:1044px;top:703px">网站注册</div><div class="t" style="left:1135px;top:694px">2020-06-09<br>17:07:35</div><div class="abs" style="left:1321px;top:704px"><svg width="17" height="15" viewBox="0 0 17 15"><path d="M1.5 1.5 H6.5 L7.5 2.8 H13.5 V12.5 H1.5 Z" fill="#f7e7a6" stroke="#d4b25e" stroke-width="0.9"/><path d="M2.5 4 H12.5" stroke="#e8c870" stroke-width="1"/><path d="M5 12.8 L13.5 4.5 L15 6 L6.5 14.3 Z" fill="#f2c445" stroke="#c8922a" stroke-width="0.7"/><path d="M4.2 14.8 L5 12.8 L6.5 14.3 Z" fill="#5a3a10"/></svg></div><div class="abs" style="left:1347px;top:704px"><svg width="15" height="15" viewBox="0 0 15 15"><path d="M3.3 3.3 L11.7 11.7 M11.7 3.3 L3.3 11.7" stroke="#d8323e" stroke-width="3.3" stroke-linecap="round"/><path d="M3.3 3.3 L11.7 11.7 M11.7 3.3 L3.3 11.7" stroke="#f55d66" stroke-width="2" stroke-linecap="round"/></svg></div>
<div class="abs" style="left:237px;top:700px;width:1186px;height:43px;background:linear-gradient(rgba(0,0,0,0),rgba(0,0,0,0.055))"></div>
<div class="abs" style="left:1029px;top:295px;width:85px;height:435px;border:3px solid #e0102c;border-radius:5px"></div>
<div class="abs" style="left:1423px;top:38px;width:6px;height:705px;background:#fafafa;border-left:1px solid #e6e6e6"></div>
<div class="abs" style="left:1427px;top:42px;width:5px;height:448px;background:#c2c2c2;border-radius:3px"></div>
<div class="abs" style="left:0;top:724px;width:106px;height:19px;background:#e6e7ea;border:1px solid #c9c9c9;border-left:none;border-bottom:none;border-radius:0 4px 0 0;font-size:13px;line-height:19px;padding-left:1px;color:#333;box-shadow:1px -1px 5px rgba(0,0,0,.12)">javascript:void(0)</div>


</body></html>
